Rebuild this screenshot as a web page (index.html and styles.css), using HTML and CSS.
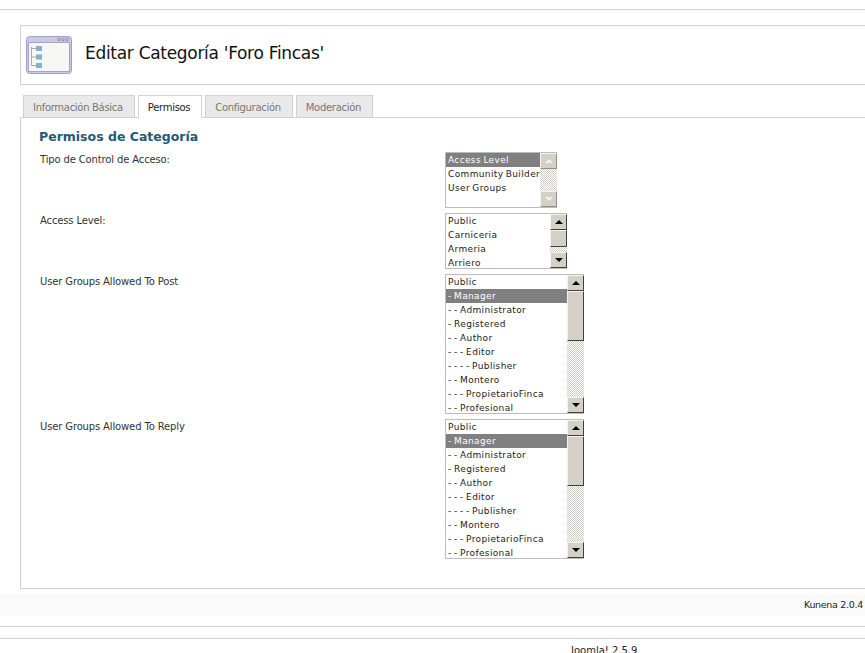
FILE: index.html
```html
<!DOCTYPE html>
<html lang="es">
<head>
<meta charset="utf-8">
<title>Editar Categoría</title>
<link rel="stylesheet" href="styles.css">
</head>
<body>
<div class="page">
  <div class="topline"></div>
  <header class="title-box">
    <svg class="logo" width="46" height="38" viewBox="0 0 46 38">
      <rect x="0.5" y="0.5" width="45" height="37" rx="3" fill="#c9c9e2" stroke="#a0a0c4"/>
      <rect x="2.5" y="6.5" width="41" height="29" fill="#f6f6f4" stroke="#a5a5c5"/>
      <circle cx="33" cy="3.5" r="1.3" fill="none" stroke="#77779c" stroke-width=".7"/>
      <circle cx="37" cy="3.5" r="1.3" fill="none" stroke="#77779c" stroke-width=".7"/>
      <circle cx="41" cy="3.5" r="1.3" fill="none" stroke="#77779c" stroke-width=".7"/>
      <path d="M5.5 11V29.5M5.5 12.5H10M5.5 21H10M5.5 29.5H10" fill="none" stroke="#a8a8a8" stroke-width="1"/>
      <rect x="10" y="10" width="6" height="5" fill="#84b0cc"/>
      <rect x="10" y="18.5" width="6" height="5" fill="#84b0cc"/>
      <rect x="10" y="27" width="6" height="5" fill="#84b0cc"/>
    </svg>
    <h1 class="title">Editar Categoría 'Foro Fincas'</h1>
  </header>
  <nav class="tabs">
    <span class="tab">Información Básica</span>
    <span class="tab tab-active">Permisos</span>
    <span class="tab">Configuración</span>
    <span class="tab">Moderación</span>
  </nav>
  <main class="panel">
    <h2 class="section">Permisos de Categoría</h2>
    <div class="form">
      <div class="label">Tipo de Control de Acceso:</div>
      <div class="list w-a">
        <div class="opts">
          <div class="opt sel">Access Level</div>
          <div class="opt">Community Builder</div>
          <div class="opt">User Groups</div>
        </div>
        <div class="sb sb-off">
          <span class="btn"><i class="up"></i></span>
          <span class="track"></span>
          <span class="btn"><i class="down"></i></span>
        </div>
      </div>
      <div class="label">Access Level:</div>
      <div class="list w-b">
        <div class="opts">
          <div class="opt">Public</div>
          <div class="opt">Carniceria</div>
          <div class="opt">Armeria</div>
          <div class="opt">Arriero</div>
        </div>
        <div class="sb">
          <span class="btn"><i class="up"></i></span>
          <span class="thumb thumb-s"></span>
          <span class="track"></span>
          <span class="btn"><i class="down"></i></span>
        </div>
      </div>
      <div class="label">User Groups Allowed To Post</div>
      <div class="list w-c">
        <div class="opts">
          <div class="opt">Public</div>
          <div class="opt sel">- Manager</div>
          <div class="opt">- - Administrator</div>
          <div class="opt">- Registered</div>
          <div class="opt">- - Author</div>
          <div class="opt">- - - Editor</div>
          <div class="opt">- - - - Publisher</div>
          <div class="opt">- - Montero</div>
          <div class="opt">- - - PropietarioFinca</div>
          <div class="opt">- - Profesional</div>
        </div>
        <div class="sb">
          <span class="btn"><i class="up"></i></span>
          <span class="thumb thumb-l"></span>
          <span class="track"></span>
          <span class="btn"><i class="down"></i></span>
        </div>
      </div>
      <div class="label">User Groups Allowed To Reply</div>
      <div class="list w-c">
        <div class="opts">
          <div class="opt">Public</div>
          <div class="opt sel">- Manager</div>
          <div class="opt">- - Administrator</div>
          <div class="opt">- Registered</div>
          <div class="opt">- - Author</div>
          <div class="opt">- - - Editor</div>
          <div class="opt">- - - - Publisher</div>
          <div class="opt">- - Montero</div>
          <div class="opt">- - - PropietarioFinca</div>
          <div class="opt">- - Profesional</div>
        </div>
        <div class="sb">
          <span class="btn"><i class="up"></i></span>
          <span class="thumb thumb-l"></span>
          <span class="track"></span>
          <span class="btn"><i class="down"></i></span>
        </div>
      </div>
    </div>
  </main>
  <div class="version">Kunena 2.0.4</div>
  <div class="rule-a"></div>
  <div class="rule-b"></div>
  <div class="joomla">Joomla! 2.5.9</div>
</div>
</body>
</html>
```
FILE: styles.css
```css
html, body {
  margin: 0;
  padding: 0;
  background: #fff;
}
.page {
  height: 653px;
  width: 865px;
  overflow: hidden;
  font-family: "DejaVu Sans", Verdana, sans-serif;
  font-size: 10px;
  color: #222;
  padding-top: 9px;
  box-sizing: border-box;
}
.topline {
  height: 1px;
  background: #d0d0d0;
  margin-bottom: 15px;
}
.title-box {
  margin-left: 20px;
  height: 60px;
  box-sizing: border-box;
  border: 1px solid #d0d0d0;
  border-right: 0;
  display: flex;
  align-items: center;
  padding-left: 5px;
  margin-bottom: 10px;
}
.logo {
  flex: none;
  margin-right: 13px;
}
.title {
  margin: 0 0 4px;
  font-size: 17px;
  font-weight: normal;
  color: #111;
  letter-spacing: -0.3px;
  font-family: "DejaVu Sans", Verdana, sans-serif;
}
.tabs {
  display: flex;
  gap: 3px;
  margin-left: 23px;
  height: 22px;
  position: relative;
  z-index: 1;
}
.tab {
  box-sizing: border-box;
  height: 22px;
  padding: 6px 11px 0 9px;
  border: 1px solid #d0d0d0;
  border-bottom: 0;
  background: #e9e9e9;
  color: #777;
  white-space: nowrap;
  letter-spacing: -0.3px;
}
.tab-active {
  background: #fff;
  color: #222;
  height: 23px;
}
.panel {
  margin-left: 20px;
  height: 472px;
  box-sizing: border-box;
  border: 1px solid #d0d0d0;
  border-right: 0;
  padding: 11px 0 0 18px;
}
.section {
  margin: 0 0 8px;
  font-size: 12.5px;
  line-height: 15px;
  font-weight: bold;
  color: #1f5a78;
}
.form {
  display: grid;
  grid-template-columns: 405px auto;
  row-gap: 5px;
  justify-content: start;
  justify-items: start;
  padding-left: 1px;
}
.label {
  color: #333;
  line-height: 13px;
  padding-top: 1px;
  letter-spacing: -0.14px;
}
.list {
  box-sizing: border-box;
  display: flex;
  border: 1px solid #bcbcbc;
  border-right: 0;
  background: #fff;
}
.w-a { width: 112px; height: 56px; }
.w-b { width: 122px; height: 56px; }
.w-c { width: 139px; height: 140px; }
.opts {
  flex: 1;
  min-width: 0;
}
.opt {
  height: 14px;
  line-height: 14px;
  padding-left: 2px;
  font-size: 9px;
  letter-spacing: 0.36px;
  word-spacing: -0.8px;
  color: #222;
  white-space: nowrap;
}
.sel {
  background: #808080;
  color: #fff;
}
.sb {
  flex: none;
  width: 17px;
  display: flex;
  flex-direction: column;
}
.btn, .thumb {
  flex: none;
  box-sizing: border-box;
  display: flex;
  align-items: center;
  justify-content: center;
  background: #d4d0c8;
  border: 1px solid;
  border-color: #f4f3ee #404040 #404040 #f4f3ee;
}
.btn { height: 16px; }
.thumb-s { height: 17px; }
.thumb-l { height: 50px; }
.track {
  flex: 1;
  background-color: #fff;
  background-image: repeating-conic-gradient(#d4d0c8 0 25%, #fff 0 50%);
  background-size: 2px 2px;
}
.up, .down {
  width: 0;
  height: 0;
  border-left: 4px solid transparent;
  border-right: 4px solid transparent;
}
.up { border-bottom: 4px solid #000; }
.down { border-top: 4px solid #000; }
.sb-off .btn {
  border-color: #f4f3ee #909090 #909090 #f4f3ee;
}
.sb-off .up { border-bottom-color: #f4f3ee; }
.sb-off .down { border-top-color: #f4f3ee; }
.version {
  margin-top: 5px;
  height: 22px;
  background: #fafafa;
  text-align: right;
  padding-right: 2px;
  line-height: 22px;
  color: #222;
  font-size: 9.5px;
  letter-spacing: -0.3px;
}
.rule-a {
  margin-top: 10px;
  height: 1px;
  background: #d0d0d0;
}
.rule-b {
  margin-top: 11px;
  height: 1px;
  background: #d0d0d0;
}
.joomla {
  margin-top: 6px;
  margin-left: 571px;
  line-height: 12px;
  font-size: 10px;
  color: #222;
}
```
